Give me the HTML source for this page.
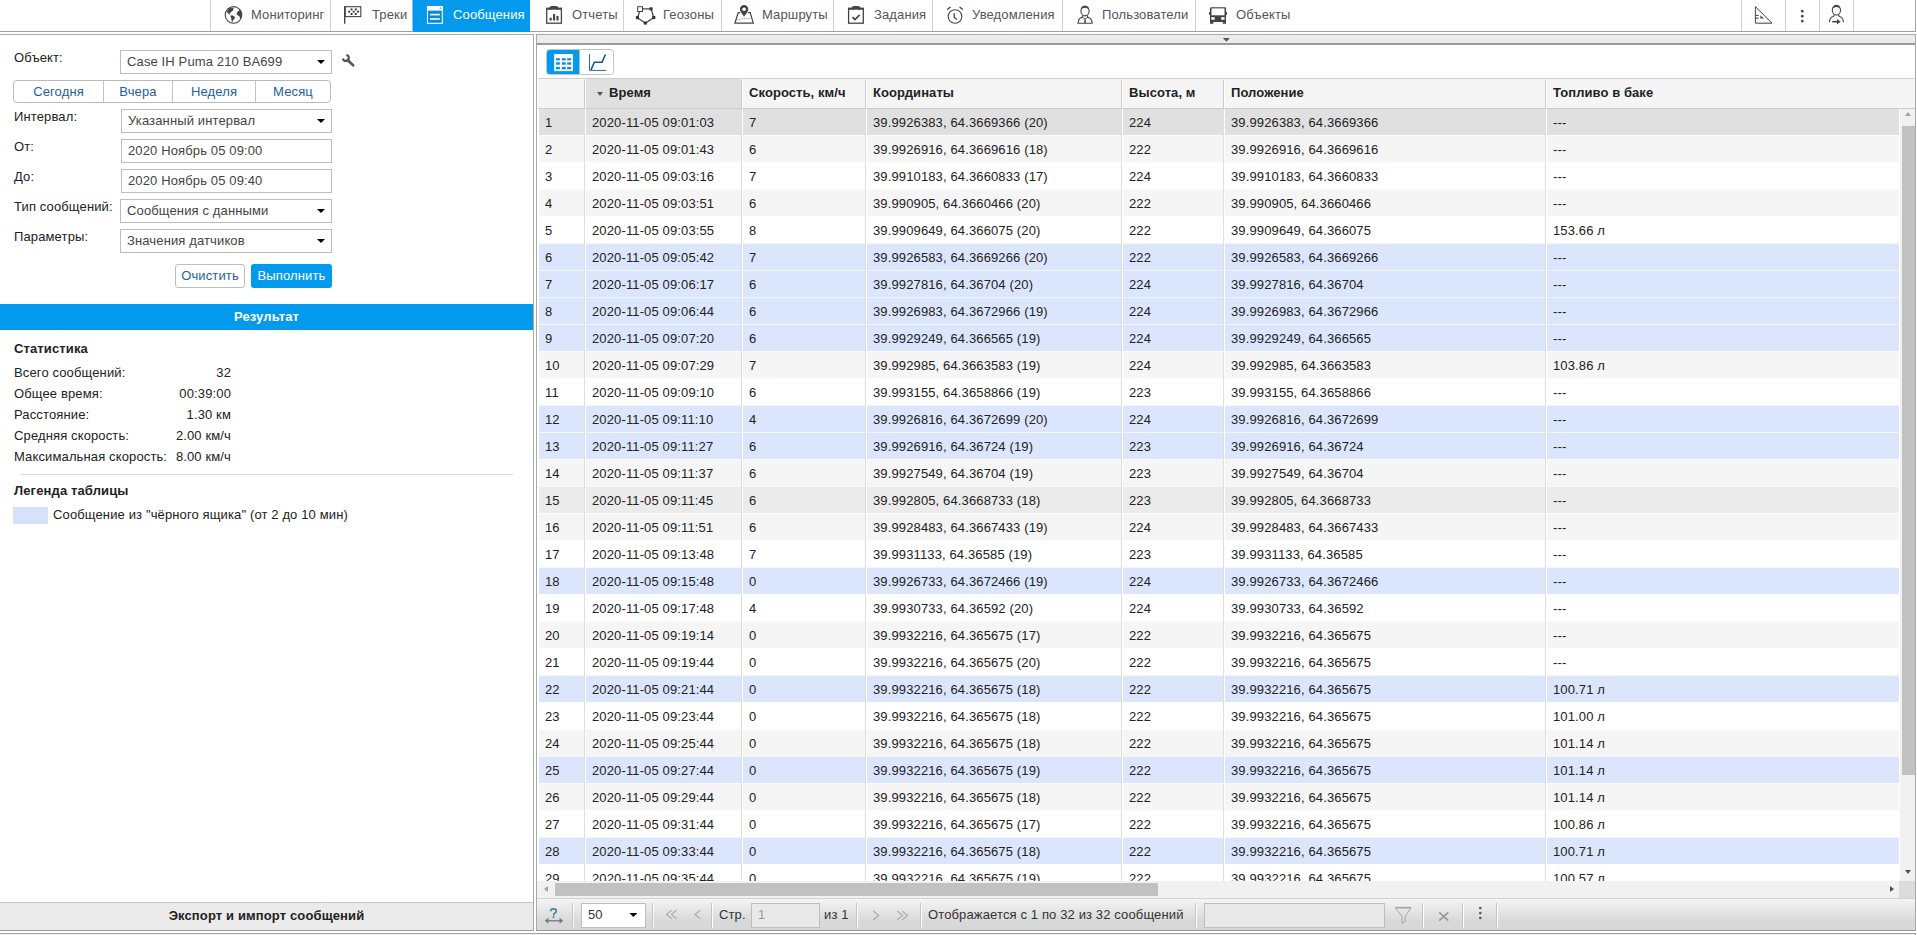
<!DOCTYPE html>
<html lang="ru"><head><meta charset="utf-8"><title>Wialon</title>
<style>
*{box-sizing:border-box;margin:0;padding:0}
html,body{width:1917px;height:935px;overflow:hidden;background:#fff}
body{position:relative;font-family:"Liberation Sans",sans-serif;font-size:13px;color:#222;line-height:15px;letter-spacing:.13px}
i{font-style:normal}
.a{position:absolute}
.t{position:absolute;white-space:nowrap;line-height:15px;height:15px}
/* nav */
#nav{position:absolute;left:0;top:0;width:1916px;height:32px;border-bottom:1px solid #a0a0a0;border-right:1px solid #a9a9a9;background:#fff}
.ns{position:absolute;top:0;width:1px;height:31px;background:#d2d2d2}
.nt{position:absolute;top:7px;white-space:nowrap;color:#555;line-height:15px}
#nav svg{position:absolute}
#act{position:absolute;left:412px;top:0;width:118px;height:32px;background:#039aee;border-left:1px solid #7cc8f5}
/* left */
#left{position:absolute;left:0;top:34px;width:534px;height:897px;border-top:1px solid #a9a9a9;border-right:1px solid #a9a9a9;border-bottom:1px solid #999;background:#fff}
.lb{position:absolute;left:14px;white-space:nowrap;color:#222}
.sel,.inp{position:absolute;height:24px;border:1px solid #bdbdbd;background:#fff;color:#444;line-height:15px;padding:3px 0 0 6px;white-space:nowrap}
.sel:after{content:"";position:absolute;right:6px;top:9px;border:4px solid transparent;border-top:4px solid #000;border-bottom:0}
.bg{position:absolute;left:13px;top:80px;width:318px;height:23px;border:1px solid #b9b9b9;border-radius:4px;background:#fff}
.bg i{position:absolute;top:0;height:21px;line-height:15px;padding-top:3px;text-align:center;color:#1e5f9e;border-left:1px solid #c4c4c4}
.btn{position:absolute;top:264px;height:24px;border-radius:3px;line-height:15px;padding-top:4px;text-align:center}
#res{position:absolute;left:0;top:304px;width:533px;height:26px;background:#039aee;color:#fff;font-weight:bold;text-align:center;line-height:15px;padding-top:5px}
.st{position:absolute;left:14px;white-space:nowrap}
.sv{position:absolute;left:100px;width:131px;text-align:right;white-space:nowrap}
#exp{position:absolute;left:0;top:902px;width:533px;height:28px;border-top:1px solid #c6c6c6;background:#ebebeb;font-weight:bold;text-align:center;line-height:15px;padding-top:5px;color:#222}
/* right */
#right{position:absolute;left:536px;top:34px;width:1380px;height:897px;border:1px solid #a9a9a9;border-bottom-color:#999;background:#fff}
#rtop{position:absolute;left:537px;top:35px;width:1378px;height:8px;background:#ececec}
#rline{position:absolute;left:537px;top:43px;width:1378px;height:2px;background:#9b9b9b}
#tg{position:absolute;left:546px;top:49px;width:68px;height:26px;border:1px solid #c4c4c4;border-radius:3.5px;background:#fff;overflow:hidden}
#tg b{position:absolute;left:-1px;top:-1px;width:34px;height:26px;background:#039aee;display:block;border-right:1px solid #a9c3d6}
/* grid */
#hd{position:absolute;left:538px;top:78px;width:1377px;height:31px;border-top:1px solid #d0d0d0;border-bottom:1px solid #cbcbcb;background:#f5f5f5}
#hd i{position:absolute;top:6px;font-weight:bold;letter-spacing:.08px;color:#222;white-space:nowrap;line-height:15px}
#hd u{position:absolute;top:1px;width:2px;height:28px;border-left:1px solid #c9c9c9;background:#fff;text-decoration:none}
#hs{position:absolute;left:48px;top:0;width:155px;height:29px;background:#e0e0e0}
#gb{position:absolute;left:537px;top:109px;width:1363px;height:772px;overflow:hidden;background:#fff}
.r{position:relative;height:27px;border-top:1px solid rgba(255,255,255,.65);width:1360px;margin-left:2px}
.r i{position:absolute;top:0;height:26px;line-height:15px;padding:6px 0 0 8px;white-space:nowrap;color:#222;overflow:hidden}
.o{background:#fff}.e{background:#f5f5f5}.b{background:#dbe6fc}.s{background:#e0e0e0}.h{background:#ebebeb}
.r:first-child{margin-top:-1px}.r .c0{left:0;width:45px;padding-left:6px}.c1{left:45px;width:157px}.c2{left:202px;width:124px}.c3{left:326px;width:256px}.c4{left:582px;width:102px}.c5{left:684px;width:322px}.c6{left:1006px;width:354px}
.cd{position:absolute;top:0;width:2px;height:772px;border-left:1px solid rgba(0,0,0,.13);background:#fff}
/* scrollbars */
#vs{position:absolute;left:1900px;top:109px;width:15px;height:772px;background:#f1f1f1}
#vs b{position:absolute;left:2px;top:17px;width:13px;height:649px;background:#c1c1c1}
#hsb{position:absolute;left:537px;top:881px;width:1378px;height:17px;background:#f1f1f1}
#hsb b{position:absolute;left:18px;top:2px;width:603px;height:13px;background:#c1c1c1}
.tri{position:absolute;width:0;height:0;border:3.75px solid transparent}
/* toolbar */
#tb{position:absolute;left:537px;top:898px;width:1378px;height:32px;border-top:1px solid #d2d2d2;background:linear-gradient(#f4f4f4,#d9d9d9 70%,#d7d7d7)}
#tb u{position:absolute;top:4px;width:2px;height:25px;border-left:1px solid #c4c4c4;background:#fff;text-decoration:none}
#tb .t{color:#333;top:8px}
#tb .bx{position:absolute;top:4px;height:25px;border:1px solid #bdbdbd;line-height:15px;padding:3px 0 0 6px}
</style></head>
<body>
<div id="nav">
<div class="ns" style="left:210px"></div><div class="ns" style="left:330px"></div><div class="ns" style="left:623px"></div><div class="ns" style="left:721px"></div><div class="ns" style="left:833px"></div><div class="ns" style="left:932px"></div><div class="ns" style="left:1062px"></div><div class="ns" style="left:1195px"></div><div class="ns" style="left:1741px"></div><div class="ns" style="left:1785px"></div><div class="ns" style="left:1819px"></div><div class="ns" style="left:1853px"></div>
<div id="act"></div>
<div class="nt" style="left:251px">Мониторинг</div>
<div class="nt" style="left:372px">Треки</div>
<div class="nt" style="left:453px;color:#fff">Сообщения</div>
<div class="nt" style="left:572px">Отчеты</div>
<div class="nt" style="left:663px">Геозоны</div>
<div class="nt" style="left:762px">Маршруты</div>
<div class="nt" style="left:874px">Задания</div>
<div class="nt" style="left:972px">Уведомления</div>
<div class="nt" style="left:1102px">Пользователи</div>
<div class="nt" style="left:1236px">Объекты</div>

</div>
<div id="left">
</div>
<div class="lb a" style="top:50px">Объект:</div>
<div class="sel" style="left:120px;top:50px;width:212px">Case IH Puma 210 BA699</div>
<div class="bg"><i style="left:0;width:89px;border-left:0">Сегодня</i><i style="left:89px;width:69px">Вчера</i><i style="left:158px;width:83px">Неделя</i><i style="left:241px;width:75px">Месяц</i></div>
<div class="lb a" style="top:109px">Интервал:</div>
<div class="sel" style="left:121px;top:109px;width:211px">Указанный интервал</div>
<div class="lb a" style="top:139px">От:</div>
<div class="inp" style="left:121px;top:139px;width:211px">2020 Ноябрь 05 09:00</div>
<div class="lb a" style="top:169px">До:</div>
<div class="inp" style="left:121px;top:169px;width:211px">2020 Ноябрь 05 09:40</div>
<div class="lb a" style="top:199px">Тип сообщений:</div>
<div class="sel" style="left:120px;top:199px;width:212px">Сообщения с данными</div>
<div class="lb a" style="top:229px">Параметры:</div>
<div class="sel" style="left:120px;top:229px;width:212px">Значения датчиков</div>
<div class="btn" style="left:175px;width:70px;border:1px solid #bdbdbd;color:#1e5f9e;background:#fff;padding-top:3px">Очистить</div>
<div class="btn" style="left:251px;width:81px;background:#039aee;color:#fff">Выполнить</div>
<div id="res">Результат</div>
<div class="st" style="top:341px;font-weight:bold">Статистика</div>
<div class="st" style="top:365px">Всего сообщений:</div><div class="sv" style="top:365px">32</div>
<div class="st" style="top:386px">Общее время:</div><div class="sv" style="top:386px">00:39:00</div>
<div class="st" style="top:407px">Расстояние:</div><div class="sv" style="top:407px">1.30 км</div>
<div class="st" style="top:428px">Средняя скорость:</div><div class="sv" style="top:428px">2.00 км/ч</div>
<div class="st" style="top:449px">Максимальная скорость:</div><div class="sv" style="top:449px">8.00 км/ч</div>
<div class="a" style="left:21px;top:474px;width:492px;height:1px;background:#dcdcdc"></div>
<div class="st" style="top:483px;font-weight:bold">Легенда таблицы</div>
<div class="a" style="left:13px;top:507px;width:35px;height:17px;background:#d6e2fb"></div>
<div class="st" style="left:53px;top:507px">Сообщение из "чёрного ящика" (от 2 до 10 мин)</div>
<div id="exp">Экспорт и импорт сообщений</div>

<div id="right"></div>
<div id="rtop"></div><div id="rline"></div>
<div id="tg"><b></b></div>
<div id="hd"><div id="hs"></div>
<u style="left:46px"></u><u style="left:203px"></u><u style="left:327px"></u><u style="left:583px"></u><u style="left:685px"></u><u style="left:1007px"></u>
<b class="a" style="left:59px;top:13px;border:3.5px solid transparent;border-top:4px solid #555;border-bottom:0"></b><i style="left:71px">Время</i><i style="left:211px">Скорость, км/ч</i><i style="left:335px">Координаты</i><i style="left:591px">Высота, м</i><i style="left:693px">Положение</i><i style="left:1015px">Топливо в баке</i>
</div>
<div id="gb">
<div class="r s"><i class="c0">1</i><i class="c1">2020-11-05 09:01:03</i><i class="c2">7</i><i class="c3">39.9926383, 64.3669366 (20)</i><i class="c4">224</i><i class="c5">39.9926383, 64.3669366</i><i class="c6">---</i></div>
<div class="r e"><i class="c0">2</i><i class="c1">2020-11-05 09:01:43</i><i class="c2">6</i><i class="c3">39.9926916, 64.3669616 (18)</i><i class="c4">222</i><i class="c5">39.9926916, 64.3669616</i><i class="c6">---</i></div>
<div class="r o"><i class="c0">3</i><i class="c1">2020-11-05 09:03:16</i><i class="c2">7</i><i class="c3">39.9910183, 64.3660833 (17)</i><i class="c4">224</i><i class="c5">39.9910183, 64.3660833</i><i class="c6">---</i></div>
<div class="r e"><i class="c0">4</i><i class="c1">2020-11-05 09:03:51</i><i class="c2">6</i><i class="c3">39.990905, 64.3660466 (20)</i><i class="c4">222</i><i class="c5">39.990905, 64.3660466</i><i class="c6">---</i></div>
<div class="r o"><i class="c0">5</i><i class="c1">2020-11-05 09:03:55</i><i class="c2">8</i><i class="c3">39.9909649, 64.366075 (20)</i><i class="c4">222</i><i class="c5">39.9909649, 64.366075</i><i class="c6">153.66 л</i></div>
<div class="r b"><i class="c0">6</i><i class="c1">2020-11-05 09:05:42</i><i class="c2">7</i><i class="c3">39.9926583, 64.3669266 (20)</i><i class="c4">222</i><i class="c5">39.9926583, 64.3669266</i><i class="c6">---</i></div>
<div class="r b"><i class="c0">7</i><i class="c1">2020-11-05 09:06:17</i><i class="c2">6</i><i class="c3">39.9927816, 64.36704 (20)</i><i class="c4">224</i><i class="c5">39.9927816, 64.36704</i><i class="c6">---</i></div>
<div class="r b"><i class="c0">8</i><i class="c1">2020-11-05 09:06:44</i><i class="c2">6</i><i class="c3">39.9926983, 64.3672966 (19)</i><i class="c4">224</i><i class="c5">39.9926983, 64.3672966</i><i class="c6">---</i></div>
<div class="r b"><i class="c0">9</i><i class="c1">2020-11-05 09:07:20</i><i class="c2">6</i><i class="c3">39.9929249, 64.366565 (19)</i><i class="c4">224</i><i class="c5">39.9929249, 64.366565</i><i class="c6">---</i></div>
<div class="r e"><i class="c0">10</i><i class="c1">2020-11-05 09:07:29</i><i class="c2">7</i><i class="c3">39.992985, 64.3663583 (19)</i><i class="c4">224</i><i class="c5">39.992985, 64.3663583</i><i class="c6">103.86 л</i></div>
<div class="r o"><i class="c0">11</i><i class="c1">2020-11-05 09:09:10</i><i class="c2">6</i><i class="c3">39.993155, 64.3658866 (19)</i><i class="c4">223</i><i class="c5">39.993155, 64.3658866</i><i class="c6">---</i></div>
<div class="r b"><i class="c0">12</i><i class="c1">2020-11-05 09:11:10</i><i class="c2">4</i><i class="c3">39.9926816, 64.3672699 (20)</i><i class="c4">224</i><i class="c5">39.9926816, 64.3672699</i><i class="c6">---</i></div>
<div class="r b"><i class="c0">13</i><i class="c1">2020-11-05 09:11:27</i><i class="c2">6</i><i class="c3">39.9926916, 64.36724 (19)</i><i class="c4">223</i><i class="c5">39.9926916, 64.36724</i><i class="c6">---</i></div>
<div class="r e"><i class="c0">14</i><i class="c1">2020-11-05 09:11:37</i><i class="c2">6</i><i class="c3">39.9927549, 64.36704 (19)</i><i class="c4">223</i><i class="c5">39.9927549, 64.36704</i><i class="c6">---</i></div>
<div class="r h"><i class="c0">15</i><i class="c1">2020-11-05 09:11:45</i><i class="c2">6</i><i class="c3">39.992805, 64.3668733 (18)</i><i class="c4">223</i><i class="c5">39.992805, 64.3668733</i><i class="c6">---</i></div>
<div class="r e"><i class="c0">16</i><i class="c1">2020-11-05 09:11:51</i><i class="c2">6</i><i class="c3">39.9928483, 64.3667433 (19)</i><i class="c4">224</i><i class="c5">39.9928483, 64.3667433</i><i class="c6">---</i></div>
<div class="r o"><i class="c0">17</i><i class="c1">2020-11-05 09:13:48</i><i class="c2">7</i><i class="c3">39.9931133, 64.36585 (19)</i><i class="c4">223</i><i class="c5">39.9931133, 64.36585</i><i class="c6">---</i></div>
<div class="r b"><i class="c0">18</i><i class="c1">2020-11-05 09:15:48</i><i class="c2">0</i><i class="c3">39.9926733, 64.3672466 (19)</i><i class="c4">224</i><i class="c5">39.9926733, 64.3672466</i><i class="c6">---</i></div>
<div class="r o"><i class="c0">19</i><i class="c1">2020-11-05 09:17:48</i><i class="c2">4</i><i class="c3">39.9930733, 64.36592 (20)</i><i class="c4">224</i><i class="c5">39.9930733, 64.36592</i><i class="c6">---</i></div>
<div class="r e"><i class="c0">20</i><i class="c1">2020-11-05 09:19:14</i><i class="c2">0</i><i class="c3">39.9932216, 64.365675 (17)</i><i class="c4">222</i><i class="c5">39.9932216, 64.365675</i><i class="c6">---</i></div>
<div class="r o"><i class="c0">21</i><i class="c1">2020-11-05 09:19:44</i><i class="c2">0</i><i class="c3">39.9932216, 64.365675 (20)</i><i class="c4">222</i><i class="c5">39.9932216, 64.365675</i><i class="c6">---</i></div>
<div class="r b"><i class="c0">22</i><i class="c1">2020-11-05 09:21:44</i><i class="c2">0</i><i class="c3">39.9932216, 64.365675 (18)</i><i class="c4">222</i><i class="c5">39.9932216, 64.365675</i><i class="c6">100.71 л</i></div>
<div class="r o"><i class="c0">23</i><i class="c1">2020-11-05 09:23:44</i><i class="c2">0</i><i class="c3">39.9932216, 64.365675 (18)</i><i class="c4">222</i><i class="c5">39.9932216, 64.365675</i><i class="c6">101.00 л</i></div>
<div class="r e"><i class="c0">24</i><i class="c1">2020-11-05 09:25:44</i><i class="c2">0</i><i class="c3">39.9932216, 64.365675 (18)</i><i class="c4">222</i><i class="c5">39.9932216, 64.365675</i><i class="c6">101.14 л</i></div>
<div class="r b"><i class="c0">25</i><i class="c1">2020-11-05 09:27:44</i><i class="c2">0</i><i class="c3">39.9932216, 64.365675 (19)</i><i class="c4">222</i><i class="c5">39.9932216, 64.365675</i><i class="c6">101.14 л</i></div>
<div class="r e"><i class="c0">26</i><i class="c1">2020-11-05 09:29:44</i><i class="c2">0</i><i class="c3">39.9932216, 64.365675 (18)</i><i class="c4">222</i><i class="c5">39.9932216, 64.365675</i><i class="c6">101.14 л</i></div>
<div class="r o"><i class="c0">27</i><i class="c1">2020-11-05 09:31:44</i><i class="c2">0</i><i class="c3">39.9932216, 64.365675 (17)</i><i class="c4">222</i><i class="c5">39.9932216, 64.365675</i><i class="c6">100.86 л</i></div>
<div class="r b"><i class="c0">28</i><i class="c1">2020-11-05 09:33:44</i><i class="c2">0</i><i class="c3">39.9932216, 64.365675 (18)</i><i class="c4">222</i><i class="c5">39.9932216, 64.365675</i><i class="c6">100.71 л</i></div>
<div class="r o"><i class="c0">29</i><i class="c1">2020-11-05 09:35:44</i><i class="c2">0</i><i class="c3">39.9932216, 64.365675 (19)</i><i class="c4">222</i><i class="c5">39.9932216, 64.365675</i><i class="c6">100.57 л</i></div>
<div class="cd" style="left:47px"></div><div class="cd" style="left:204px"></div><div class="cd" style="left:328px"></div><div class="cd" style="left:584px"></div><div class="cd" style="left:686px"></div><div class="cd" style="left:1008px"></div>
</div>
<div id="vs"><b></b><s class="tri" style="left:5px;top:3px;border-bottom:4px solid #a3a3a3;border-top:0"></s><s class="tri" style="left:5px;top:761px;border-top:4px solid #505050;border-bottom:0"></s></div>
<div id="hsb"><b></b><s class="tri" style="left:7px;top:5px;border-right:4px solid #a3a3a3;border-left:0"></s><s class="tri" style="left:1353px;top:5px;border-left:4px solid #505050;border-right:0"></s><div class="a" style="left:1362px;top:0;width:16px;height:17px;background:#dcdcdc"></div></div>
<div id="tb">
<u style="left:35px"></u><u style="left:115px"></u><u style="left:174px"></u><u style="left:319px"></u><u style="left:383px"></u><u style="left:658px"></u><u style="left:885px"></u><u style="left:925px"></u><u style="left:959px"></u>
<div class="bx" style="left:44px;width:65px;background:#fff;color:#333">50</div>
<div class="t" style="left:182px">Стр.</div>
<div class="bx" style="left:214px;width:69px;background:#e9e9e9;color:#999">1</div>
<div class="t" style="left:287px">из 1</div>
<div class="t" style="left:391px">Отображается с 1 по 32 из 32 сообщений</div>
<div class="bx" style="left:667px;width:181px;background:#e9e9e9"></div>
</div>
<div class="a" style="left:0;top:933px;width:1916px;height:2px;background:#f1f1f1;border-top:1px solid #a0a0a0;border-right:1px solid #a0a0a0"></div>
<svg class="a" style="left:0;top:0" width="1917" height="48" viewBox="0 0 1917 48" fill="none" stroke="none">
<!-- globe -->
<circle cx="233.5" cy="14.9" r="8.3" stroke="#444" stroke-width="1.1" fill="#fff"/>
<path fill="#444" d="M226.9 12 L227.8 9.8 L229.5 8.1 L233.2 7.8 L233.6 9 L233.2 10.3 L231.2 12 L229.8 13 L229.6 14 L230.6 14.8 L229.7 14.9 L227.8 13Z"/>
<path fill="#444" d="M230.3 15.8 L232.3 15.2 L233.6 16 L235.2 17.4 L234.2 19 L233 20.2 L232.3 22.6 L231.7 21.5 L231.3 18.6Z"/>
<path fill="#444" d="M236.5 13.7 L237.7 11.6 L239.2 10.6 L239.4 9.6 L240.4 9.8 L241.5 12.4 L241.7 15 L241.2 17.4 L240.3 19 L239.8 17.6 L239.2 15.9 L237.4 15.3Z"/>
<!-- flag -->
<path stroke="#444" stroke-width="1.4" d="M344.7 6.2 V23.8"/>
<rect x="345.2" y="6.7" width="15.6" height="9.9" stroke="#444" stroke-width="1.1"/>
<g fill="#333"><rect x="350.6" y="8.4" width="1.9" height="1.9"/><rect x="354.8" y="8.4" width="1.9" height="1.9"/><rect x="348.2" y="10.7" width="1.9" height="1.9"/><rect x="352.7" y="10.7" width="1.9" height="1.9"/><rect x="357" y="10.7" width="1.9" height="1.9"/><rect x="350.6" y="13" width="1.9" height="1.9"/><rect x="354.8" y="13" width="1.9" height="1.9"/></g>
<!-- messages (white on blue) -->
<rect x="427.5" y="6.5" width="14.8" height="16.8" stroke="#fff" stroke-width="1.1" fill="rgba(0,60,130,.16)"/>
<rect x="427" y="6" width="15.8" height="4.6" fill="#fff"/>
<rect x="439.7" y="7.5" width="1.3" height="1.3" fill="#039aee"/>
<rect x="430" y="13.8" width="9.8" height="1.6" fill="#fff"/><rect x="430" y="18.2" width="9.8" height="1.6" fill="#fff"/>
<!-- reports -->
<rect x="546.7" y="8.4" width="14.7" height="14.8" stroke="#444" stroke-width="1.3"/>
<path fill="#444" d="M549.4 10 V8.2 Q549.4 5.9 551.8 5.9 H556 Q558.4 5.9 558.4 8.2 V10 H556.9 V8.9 H550.9 V10Z"/>
<rect x="546.1" y="7.8" width="15.9" height="1.9" fill="#444"/><rect x="549.6" y="17.7" width="2.1" height="2.8" fill="#444"/><rect x="553" y="14" width="2.1" height="6.5" fill="#444"/><rect x="556.4" y="15.9" width="2.1" height="4.6" fill="#444"/>
<!-- geofences -->
<path stroke="#444" stroke-width="1.25" d="M642.8 8.8 H651 L653.8 17.6 L645.3 23.3 L637.5 17.7 L639.5 11.9"/>
<rect x="637.7" y="6.7" width="4.8" height="4.8" stroke="#444" stroke-width="1" fill="#fff"/>
<g fill="#333"><rect x="649.5" y="7.3" width="3.1" height="3.1"/><rect x="635.9" y="16.1" width="3.1" height="3.1"/><rect x="652.2" y="16" width="3.1" height="3.1"/><rect x="643.8" y="21.5" width="3.1" height="3.1"/></g>
<!-- routes -->
<path stroke="#444" stroke-width="1.2" d="M740.2 12.6 H738.2 L734.9 23.2 H753.3 L750.2 12.6 H748"/>
<path fill="#444" d="M744.1 5 C741.6 5 739.9 6.9 739.9 9.1 C739.9 11.6 742.3 14.2 744.1 16.7 C745.9 14.2 748.3 11.6 748.3 9.1 C748.3 6.9 746.6 5 744.1 5Z"/>
<circle cx="744.1" cy="9.2" r="1.8" fill="#fff"/>
<path stroke="#888" stroke-width="1" stroke-dasharray="1 1" d="M737.4 19.6 H741 M741.6 18.6 H750.3"/>
<!-- tasks -->
<rect x="848.6" y="8.4" width="14.7" height="14.8" stroke="#444" stroke-width="1.3"/>
<path fill="#444" d="M851.6 10 V8.2 Q851.6 5.9 854 5.9 H858 Q860.4 5.9 860.4 8.2 V10 H858.9 V8.9 H853.1 V10Z"/>
<rect x="848" y="7.8" width="15.9" height="1.9" fill="#444"/><path stroke="#444" stroke-width="1.7" d="M852.4 17.2 L855 19.5 L859.6 14.9"/>
<!-- alarm -->
<circle cx="955" cy="16.5" r="6.8" stroke="#444" stroke-width="1.1"/>
<path stroke="#444" stroke-width="1.5" d="M947.2 9.5 L950.5 7 M959.6 7 L962.8 9.5"/>
<path stroke="#444" stroke-width="1.3" d="M954.2 13.2 V17.3 L956.9 19.5"/>
<!-- users -->
<ellipse cx="1085" cy="11" rx="4.1" ry="4.9" stroke="#444" stroke-width="1.1"/>
<path fill="#444" d="M1081 9.4 Q1081.4 6 1085 6 Q1088.6 6 1089 9.4 Q1087 7.8 1085 7.8 Q1083 7.8 1081 9.4Z"/>
<path stroke="#444" stroke-width="1.1" d="M1082.9 15.4 L1082.3 17.2 Q1079 18 1078.6 20.6 L1078 23.3 H1092.2 L1091.6 20.6 Q1091 18 1087.8 17.2 L1087.1 15.4"/>
<path stroke="#444" stroke-width="1" d="M1082.3 17.2 L1085 19.2 L1087.8 17.2"/>
<rect x="1084.3" y="19.4" width="1.5" height="3.6" fill="#444"/>
<!-- units (bus) -->
<path fill="#444" d="M1210 8.4 Q1210 7.2 1211.2 7.2 H1224.8 Q1226 7.2 1226 8.4 V23.7 H1222.8 V21.9 H1213.4 V23.7 H1210Z"/>
<rect x="1211.5" y="8.4" width="13" height="6.9" fill="#fff"/>
<rect x="1211.3" y="17.2" width="3.4" height="2.5" fill="#fff"/><rect x="1221.2" y="17.2" width="3.4" height="2.5" fill="#fff"/>
<rect x="1209" y="12" width="1.2" height="2.8" fill="#444"/><rect x="1225.8" y="12" width="1.2" height="2.8" fill="#444"/>
<!-- collapse caret -->
<path fill="#555" d="M1222.9 38 H1229.9 L1226.4 41.7Z"/>
<!-- ruler -->
<path stroke="#444" stroke-width="1" fill="#f5fafc" d="M1755.4 6.6 V23.2 H1772 Z"/>
<path stroke="#444" stroke-width="1" d="M1755.4 15.4 H1758.6 M1755.4 18.2 H1758.6"/>
<path fill="#444" d="M1760.4 15.4 V18.5 H1764Z"/>
<!-- dots -->
<circle cx="1802.3" cy="11.2" r="1.35" fill="#444"/><circle cx="1802.3" cy="16.2" r="1.35" fill="#444"/><circle cx="1802.3" cy="21.1" r="1.35" fill="#444"/>
<!-- user logout -->
<ellipse cx="1836.4" cy="10.2" rx="4.1" ry="4.8" stroke="#444" stroke-width="1.1"/>
<path fill="#444" d="M1832.4 8.6 Q1832.8 5.2 1836.4 5.2 Q1840 5.2 1840.4 8.6 Q1838.4 7 1836.4 7 Q1834.4 7 1832.4 8.6Z"/>
<path stroke="#444" stroke-width="1.1" d="M1834.3 14.6 L1833.7 16.3 Q1830.6 17 1830 19.4 L1829.2 22.2 M1838.5 14.6 L1839.1 16.3 Q1842.2 17 1842.8 19.4 L1843.6 22.2"/>
<path stroke="#444" stroke-width="1.6" d="M1832.2 21.7 H1838"/>
<path fill="#444" d="M1837 19 L1840.6 21.7 L1837 24.4Z"/>
</svg>
<svg class="a" style="left:338px;top:50px" width="20" height="20" viewBox="338 50 20 20" fill="none"><path stroke="#555" stroke-width="2.1" d="M346.3 55 A3 3 0 1 1 342.9 58.5"/><path stroke="#555" stroke-width="2.7" stroke-linecap="round" d="M347.6 60 L353.2 65.4"/></svg>
<!-- toggle icons -->
<svg class="a" style="left:546px;top:49px" width="68" height="26" viewBox="546 49 68 26">
<rect x="554.2" y="54" width="18.8" height="17.1" fill="#fff"/>
<g fill="#0a8fdc"><rect x="556" y="58.2" width="3.9" height="2.2"/><rect x="561.8" y="58.2" width="3.9" height="2.2"/><rect x="567.2" y="58.2" width="3.9" height="2.2"/><rect x="556" y="62.3" width="3.9" height="2.4"/><rect x="561.8" y="62.3" width="3.9" height="2.4"/><rect x="567.2" y="62.3" width="3.9" height="2.4"/><rect x="556" y="66.9" width="3.9" height="2.4"/><rect x="561.8" y="66.9" width="3.9" height="2.4"/><rect x="567.2" y="66.9" width="3.9" height="2.4"/></g>
<path stroke="#2b6ca3" stroke-width="1" fill="none" d="M589.5 54.2 V70.4 H606.2"/>
<path stroke="#1c568f" stroke-width="1.6" fill="none" d="M591 69.9 L594.3 62.2 H602 L605.5 54.5"/>
</svg>
<svg class="a" style="left:537px;top:899px" width="1378" height="31" viewBox="537 899 1378 31" fill="none">
<path stroke="#3b7797" stroke-width="1.5" d="M550.7 911.3 Q550.7 908.7 553.5 908.7 Q556.3 908.7 556.3 911 Q556.3 912.3 554.8 913.2 Q553.5 914 553.5 915.4"/>
<rect x="552.7" y="916.3" width="1.6" height="1.6" fill="#3b7797"/>
<path stroke="#777" stroke-width="1.3" d="M547 920.8 H561"/>
<path fill="#777" d="M544.8 920.8 L548.4 917.8 V923.8Z M563.2 920.8 L559.6 917.8 V923.8Z"/>
<path fill="#000" d="M629.4 913 H637.4 L633.4 917Z"/>
<path stroke="#a9a9a9" stroke-width="1.1" d="M671.6 910.1 L666.5 914.5 L671.6 918.9 M676.6 910.1 L671.5 914.5 L676.6 918.9 M700.3 910.1 L695 914.5 L700.3 918.9"/>
<path stroke="#a9a9a9" stroke-width="1.1" d="M873.2 911 L878.6 915.4 L873.2 919.8 M897.3 911 L902.5 915.4 L897.3 919.8 M902.3 911 L907.5 915.4 L902.3 919.8"/>
<path stroke="#a6a6a6" stroke-width="1" d="M1395.6 908.4 L1402 916.2 V923.3 L1405.3 921.4 V916.2 L1410.7 908.4"/>
<path stroke="#a6a6a6" stroke-width="1.7" d="M1395.2 907.7 H1411.1"/>
<path stroke="#9a9a9a" stroke-width="1.7" d="M1439.2 912.3 L1448.3 920.6 M1448.3 912.3 L1439.2 920.6"/>
<circle cx="1480.3" cy="908" r="1.3" fill="#555"/><circle cx="1480.3" cy="913" r="1.3" fill="#555"/><circle cx="1480.3" cy="918" r="1.3" fill="#555"/>
</svg>

</body></html>
